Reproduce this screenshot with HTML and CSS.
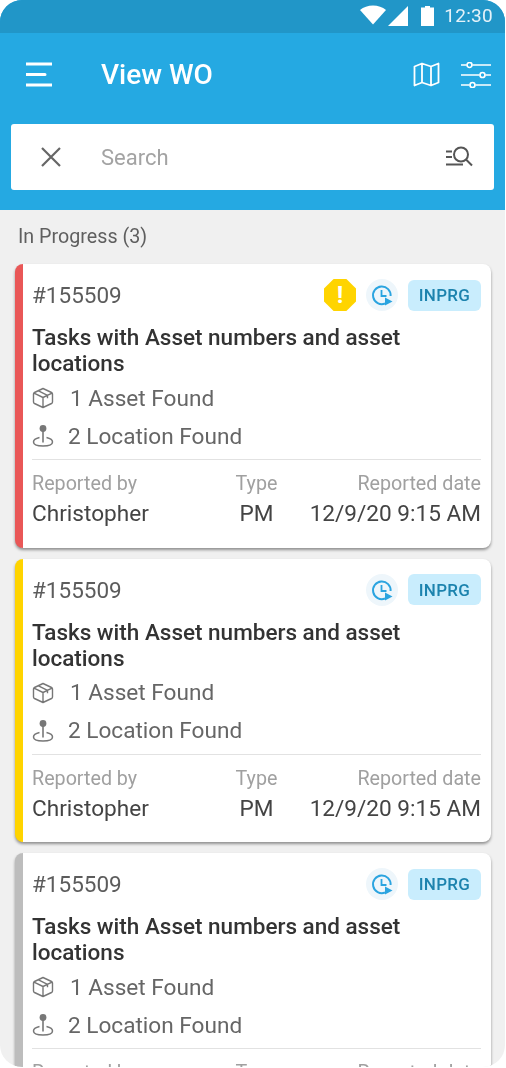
FILE: index.html
```html
<!DOCTYPE html>
<html lang="en">
<head>
<meta charset="utf-8">
<title>View WO</title>
<link rel="stylesheet" href="styles.css">
</head>
<body>
<svg class="defs" width="0" height="0" aria-hidden="true">
  <symbol id="i-box" viewBox="0 0 22 22"><path d="M11 1.500 19.500 5.500c.6.300 1 .9 1 1.500v8c0 .6-.4 1.200-1 1.500L11 20.500 2.500 16.500c-.6-.3-1-.9-1-1.500V7c0-.6.400-1.200 1-1.500zM2 6.200l9 4.300 9-4.300M11 10.500v10M6.500 3.800l9 4.500v3" fill="none" stroke="currentColor" stroke-width="1.400" stroke-linejoin="round"/></symbol>
  <symbol id="i-pin" viewBox="0 0 22 24"><circle cx="11" cy="4.500" r="3.400" fill="currentColor"/><path d="M11 7v11.500" stroke="currentColor" stroke-width="1.600"/><path d="M7.500 13.500C4 14.300 1.500 15.800 1.500 18c0 2.600 4.200 4 9.500 4s9.500-1.400 9.500-4c0-2.200-2.500-3.700-6-4.500" fill="none" stroke="currentColor" stroke-width="1.500"/></symbol>
  <symbol id="i-clock" viewBox="0 0 32 32"><circle cx="16" cy="16" r="16" fill="#eef6fb"/><path d="M19 24.500A8.800 8.800 0 1 1 24.600 17" fill="none" stroke="#2ba4e0" stroke-width="2"/><path d="M15.500 11v6h5" fill="none" stroke="#2ba4e0" stroke-width="1.800"/><path d="M19 18.500l7.500 4-7.500 4z" fill="#2ba4e0"/></symbol>
</svg>
<div class="phone">
  <header class="top">
    <div class="status">
      <svg class="s-wifi" width="26" height="20" viewBox="0 0 26 20"><path d="M0 5C3.500 2 8 .5 13 .5S22.500 2 26 5L13 19.500z" fill="#fff"/></svg>
      <svg class="s-signal" width="20" height="20" viewBox="0 0 20 20"><path d="M20 0v20H0z" fill="#fff"/></svg>
      <svg class="s-batt" width="13" height="20" viewBox="0 0 13 20"><path d="M4 0h5v1.500h4V20H0V1.500h4z" fill="#fff"/></svg>
      <span class="s-time">12:30</span>
    </div>
    <div class="bar">
      <svg class="menu" width="26" height="25" viewBox="0 0 26 25"><path d="M0 2h26M0 12.500h19M0 23h26" stroke="#fff" stroke-width="3" stroke-linecap="round"/></svg>
      <h1 class="title">View WO</h1>
      <svg class="map" width="27" height="25" viewBox="0 0 27 25"><path d="M1.500 4.500 9 1.500l9 3 7.500-3v19L18 23.500l-9-3-7.500 3zM9 1.500v19M18 4.500v19" fill="none" stroke="#fff" stroke-width="1.800" stroke-linejoin="round"/></svg>
      <svg class="tune" width="30" height="26" viewBox="0 0 30 26"><path d="M0 3h5.500M11.500 3H30M0 13h18.500M24.500 13H30M0 23h8.500M14.500 23H30" stroke="#fff" stroke-width="1.700"/><circle cx="8.500" cy="3" r="2.500" fill="none" stroke="#fff" stroke-width="1.700"/><circle cx="21.500" cy="13" r="2.500" fill="none" stroke="#fff" stroke-width="1.700"/><circle cx="11.500" cy="23" r="2.500" fill="none" stroke="#fff" stroke-width="1.700"/></svg>
    </div>
    <div class="search">
      <svg class="close" width="20" height="20" viewBox="0 0 20 20"><path d="M1 1l18 18M19 1 1 19" stroke="#666" stroke-width="2.200"/></svg>
      <span class="placeholder">Search</span>
      <svg class="find" width="28" height="24" viewBox="0 0 28 24"><circle cx="16" cy="9.500" r="7" fill="none" stroke="#555" stroke-width="2"/><path d="M21 14.500l6 6M1 6.500h6M1 12h6M1 19.500h17" stroke="#555" stroke-width="2"/></svg>
    </div>
  </header>
  <main class="list">
    <div class="section">In Progress (3)</div>

    <article class="card card-red">
      <div class="row-top">
        <span class="wo">#155509</span>
        <span class="alert">!</span>
        <svg class="clock" width="32" height="32"><use href="#i-clock"/></svg>
        <span class="tag">INPRG</span>
      </div>
      <h2 class="task">Tasks with Asset numbers and asset locations</h2>
      <div class="line"><svg class="ic" width="22" height="22"><use href="#i-box"/></svg><span class="gap-a">1 Asset Found</span></div>
      <div class="line"><svg class="ic" width="22" height="24"><use href="#i-pin"/></svg><span class="gap-b">2 Location Found</span></div>
      <div class="meta">
        <div class="col col-by"><span class="lab">Reported by</span><span class="val">Christopher</span></div>
        <div class="col col-type"><span class="lab">Type</span><span class="val">PM</span></div>
        <div class="col col-date"><span class="lab">Reported date</span><span class="val">12/9/20 9:15 AM</span></div>
      </div>
    </article>

    <article class="card card-yellow">
      <div class="row-top">
        <span class="wo">#155509</span>
        <svg class="clock" width="32" height="32"><use href="#i-clock"/></svg>
        <span class="tag">INPRG</span>
      </div>
      <h2 class="task">Tasks with Asset numbers and asset locations</h2>
      <div class="line"><svg class="ic" width="22" height="22"><use href="#i-box"/></svg><span class="gap-a">1 Asset Found</span></div>
      <div class="line"><svg class="ic" width="22" height="24"><use href="#i-pin"/></svg><span class="gap-b">2 Location Found</span></div>
      <div class="meta">
        <div class="col col-by"><span class="lab">Reported by</span><span class="val">Christopher</span></div>
        <div class="col col-type"><span class="lab">Type</span><span class="val">PM</span></div>
        <div class="col col-date"><span class="lab">Reported date</span><span class="val">12/9/20 9:15 AM</span></div>
      </div>
    </article>

    <article class="card card-grey">
      <div class="row-top">
        <span class="wo">#155509</span>
        <svg class="clock" width="32" height="32"><use href="#i-clock"/></svg>
        <span class="tag">INPRG</span>
      </div>
      <h2 class="task">Tasks with Asset numbers and asset locations</h2>
      <div class="line"><svg class="ic" width="22" height="22"><use href="#i-box"/></svg><span class="gap-a">1 Asset Found</span></div>
      <div class="line"><svg class="ic" width="22" height="24"><use href="#i-pin"/></svg><span class="gap-b">2 Location Found</span></div>
      <div class="meta">
        <div class="col col-by"><span class="lab">Reported by</span><span class="val">Christopher</span></div>
        <div class="col col-type"><span class="lab">Type</span><span class="val">PM</span></div>
        <div class="col col-date"><span class="lab">Reported date</span><span class="val">12/9/20 9:15 AM</span></div>
      </div>
    </article>
  </main>
</div>
</body>
</html>
```
FILE: styles.css
```css
* { box-sizing: border-box; }
html, body { margin: 0; padding: 0; height: 100%; background: #fff; overflow: hidden; }
body { font-family: Roboto, "Liberation Sans", sans-serif; }
.defs { display: block; height: 0; }
.phone {
  width: 505px;
  height: 1067px;
  border-radius: 22px;
  overflow: hidden;
  background: #f0f0f0;
  display: flex;
  flex-direction: column;
  filter: blur(.35px);
}
.top { background: #25a9e2; flex: none; height: 210px; }
.status {
  height: 33px;
  background: #2196c8;
  display: flex;
  align-items: center;
  justify-content: flex-end;
  padding-right: 12px;
}
.s-wifi { margin-right: 2px; margin-top: -3px; }
.s-signal { margin-right: 13px; margin-top: -1px; }
.s-batt { margin-right: 10px; margin-top: -1px; }
.s-time { color: #e4f2f9; font-size: 19px; line-height: 20px; letter-spacing: .3px; margin-top: -2px; }
.bar {
  height: 91px;
  display: flex;
  align-items: center;
  padding: 0 14px 8px 26px;
}
.title { margin: 0 0 0 49px; flex: 1; font-size: 28px; font-weight: 500; line-height: 32px; color: #fff; }
.map { margin-right: 21px; }
.search {
  margin: 0 11px;
  height: 66px;
  background: #fff;
  border-radius: 3px;
  display: flex;
  align-items: center;
  padding: 0 21px 0 30px;
}
.close { flex: none; }
.placeholder { margin-left: 40px; flex: 1; font-size: 22px; color: #a3a3a3; }
.list { padding: 0 14px 0 15px; width: 100%; }
.section { height: 54px; padding: 16px 0 0 3px; font-size: 19.700px; font-weight: 400; line-height: 22px; color: #5f5f5f; }
.card {
  background: #fff;
  border-radius: 8px;
  border-left: 8px solid #e95757;
  height: 283.700px;
  margin-bottom: 11px;
  padding: 14px 10px 0 9px;
  box-shadow: 0 2px 3px rgba(0,0,0,.4);
}
.card-yellow { border-left-color: #ffd400; }
.card-grey { border-left-color: #bdbdbd; }
.row-top { height: 34px; display: flex; align-items: center; }
.wo { flex: 1; font-size: 22.500px; color: #5c5c5c; }
.alert {
  width: 32px; height: 32px; margin-right: 10px;
  background: #ffd400; color: #fff;
  clip-path: polygon(30% 0, 70% 0, 100% 30%, 100% 70%, 70% 100%, 30% 100%, 0 70%, 0 30%);
  display: flex; align-items: center; justify-content: center;
  font-size: 24px; font-weight: 700; line-height: 32px;
}
.clock { margin-right: 10px; flex: none; }
.tag {
  width: 73px; height: 31px; border-radius: 6px;
  background: #c9edfd; color: #1c83ae;
  display: flex; align-items: center; justify-content: center;
  font-size: 17px; font-weight: 500; letter-spacing: .3px;
}
.task { margin: 12px 0 0; font-size: 22.500px; font-weight: 500; line-height: 26px; color: #333; height: 55px; }
.line { height: 38px; display: flex; align-items: center; color: #666; font-size: 22.600px; }
.ic { flex: none; color: #777; }
.gap-a { margin-left: 16px; }
.gap-b { margin-left: 14px; }
.meta {
  margin-top: 4px;
  border-top: 1px solid #e2e2e2;
  padding-top: 11px;
  display: flex;
  justify-content: space-between;
}
.col { display: flex; flex-direction: column; }
.col-by { width: 190px; }
.col-type { align-items: center; width: 48px; }
.col-date { align-items: flex-end; width: 190px; }
.lab { font-size: 19.700px; line-height: 26px; color: #a0a0a0; }
.val { font-size: 22.600px; line-height: 34px; color: #444; }
```
